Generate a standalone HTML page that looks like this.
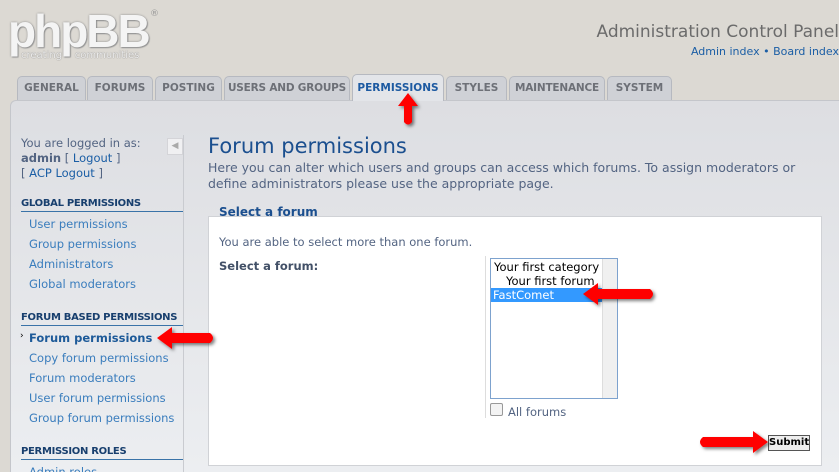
<!DOCTYPE html>
<html style="overflow:hidden"><head><style>
*{margin:0;padding:0;box-sizing:border-box}
html,body{width:839px;height:472px;overflow:hidden}
body{background:#dcd9d3;font-family:"DejaVu Sans",Verdana,sans-serif;font-size:11px;position:relative;color:#536482}
.abs{position:absolute;white-space:nowrap}
.tab{position:absolute;top:76px;height:24px;background:#cfd1d6;border:1px solid #b6b9c0;border-bottom:none;border-radius:5px 5px 0 0;font-size:10.5px;font-weight:bold;color:#6d7077;text-align:center;line-height:22px}
.panel{position:absolute;left:10px;top:100px;width:829px;height:372px;background:linear-gradient(#dddee2,#eceef1);border:1px solid #c4c6cb;border-bottom:none;border-right:none;border-radius:6px 0 0 0}
.side a{display:block;color:#3a7dbd;font-size:11.5px;height:20px;line-height:20px;padding-left:29px}
.h{position:absolute;left:21px;width:162px;font-size:10px;font-weight:bold;color:#183f6e;border-bottom:1px solid #3a73a8;padding-bottom:2px;white-space:nowrap;letter-spacing:-.3px}
</style></head><body>
<div class="abs" style="left:8px;top:4px;font-size:46px;font-weight:bold;color:#f4f4f4;letter-spacing:-2px;font-family:'Liberation Sans',sans-serif;text-shadow:0 0 2px #888,1px 1px 1px #999">phpBB</div>
<div class="abs" style="left:150px;top:9px;font-size:9px;color:#999">®</div>
<div class="abs" style="left:21px;top:50px;font-size:10px;color:#eee;text-shadow:0 0 1px #666">creating&nbsp;&nbsp;&nbsp;&nbsp;communities</div>
<div class="abs" style="right:0px;top:22px;font-size:17px;color:#6b6b6b">Administration Control Panel</div>
<div class="abs" style="right:0px;top:45px;font-size:11px;color:#1b5ea5">Admin index • Board index</div>

<div class="panel"></div>
<div class="tab" style="left:17px;width:69px">GENERAL</div>
<div class="tab" style="left:87px;width:66px">FORUMS</div>
<div class="tab" style="left:155px;width:67px">POSTING</div>
<div class="tab" style="left:224px;width:126px;letter-spacing:-.2px">USERS AND GROUPS</div>
<div class="tab" style="left:352px;width:92px;top:74px;height:27px;background:#e3e5e9;color:#1d5aa1;line-height:26px">PERMISSIONS</div>
<div class="tab" style="left:446px;width:61px">STYLES</div>
<div class="tab" style="left:509px;width:96px;letter-spacing:-.2px">MAINTENANCE</div>
<div class="tab" style="left:607px;width:65px">SYSTEM</div>

<div class="abs" style="left:183px;top:135px;width:1px;height:340px;background:#c9cbd0"></div>
<div class="abs" style="left:167px;top:138px;width:16px;height:17px;background:#f0f0f2;border:1px solid #d4d4d8;color:#aaa;font-size:9px;line-height:15px;text-align:center">◀</div>
<div class="abs" style="left:21px;top:136px;line-height:15px;font-size:11.5px;color:#536482">You are logged in as:<br><b>admin</b> [ <span style="color:#1b5ea5">Logout</span> ]<br>[ <span style="color:#1b5ea5">ACP Logout</span> ]</div>

<div class="h" style="top:198px">GLOBAL PERMISSIONS</div>
<div class="abs side" style="left:0;top:214px"><a>User permissions</a><a>Group permissions</a><a>Administrators</a><a>Global moderators</a></div>
<div class="h" style="top:312px">FORUM BASED PERMISSIONS</div>
<div class="abs side" style="left:0;top:328px"><a style="font-weight:bold;color:#1d5a99">Forum permissions</a><a>Copy forum permissions</a><a>Forum moderators</a><a>User forum permissions</a><a>Group forum permissions</a></div>
<div class="abs" style="left:20px;top:331px;font-size:9px;color:#000">›</div>
<div class="h" style="top:446px">PERMISSION ROLES</div>
<div class="abs side" style="left:0;top:462px"><a>Admin roles</a></div>

<div class="abs" style="left:208px;top:134px;font-size:21px;color:#1b4f8f">Forum permissions</div>
<div class="abs" style="left:208px;top:160px;font-size:12.5px;line-height:16px;color:#536482">Here you can alter which users and groups can access which forums. To assign moderators or<br>define administrators please use the appropriate page.</div>

<div class="abs" style="left:208px;top:216px;width:614px;height:250px;background:#fff;border:1px solid #d0d2d6"></div>
<div class="abs" style="left:219px;top:205px;font-size:12px;font-weight:bold;color:#1b4f8f">Select a forum</div>
<div class="abs" style="left:219px;top:235px;font-size:11.5px;color:#536482">You are able to select more than one forum.</div>
<div class="abs" style="left:219px;top:259px;font-size:11.5px;font-weight:bold;color:#425067">Select a forum:</div>
<div class="abs" style="left:485px;top:256px;width:1px;height:162px;background:#ddd"></div>
<div class="abs" style="left:490px;top:258px;width:128px;height:141px;border:1px solid #7da2ce;background:#fff;font-size:11.5px;color:#000;line-height:14px">
<div style="position:absolute;right:0;top:0;width:15px;height:139px;background:#f0f0f0;border-left:1px solid #ddd"></div>
<div style="padding:1px 3px">Your first category</div>
<div style="padding:0 3px 0 15px;margin-top:-1px">Your first forum</div>
<div style="width:112px;background:#3399ff;color:#fff;padding:0 2px">FastComet</div>
</div>
<div class="abs" style="left:490px;top:403px;width:13px;height:13px;border:1px solid #999;border-radius:2px;background:#f3f3f3"></div>
<div class="abs" style="left:508px;top:405px;font-size:11.5px;color:#536482">All forums</div>
<div class="abs" style="left:768px;top:435px;width:42px;height:16px;border:1px solid #555;background:#eee;font-size:10px;font-weight:bold;color:#000;text-align:center;line-height:14px">Submit</div>

<svg class="abs" style="left:0;top:0" width="839" height="472">
<defs><filter id="s"><feDropShadow dx="2" dy="2" stdDeviation="1.5" flood-color="#000" flood-opacity=".5"/></filter></defs>
<g fill="#f00" filter="url(#s)">
<path d="M398 106 L408 93 L418 106 L412 106 L412 122 Q408 127 404 122 L404 106Z"/>
<path d="M157 338 L172 327 L172 333 L210 333 Q216 338 210 343 L172 343 L172 349Z"/>
<path d="M583 294 L598 283 L598 289 L650 289 Q656 294 650 299 L598 299 L598 305Z"/>
<path d="M768 442 L753 431 L753 437 L703 437 Q697 442 703 447 L753 447 L753 453Z"/>
</g></svg>
</body></html>
